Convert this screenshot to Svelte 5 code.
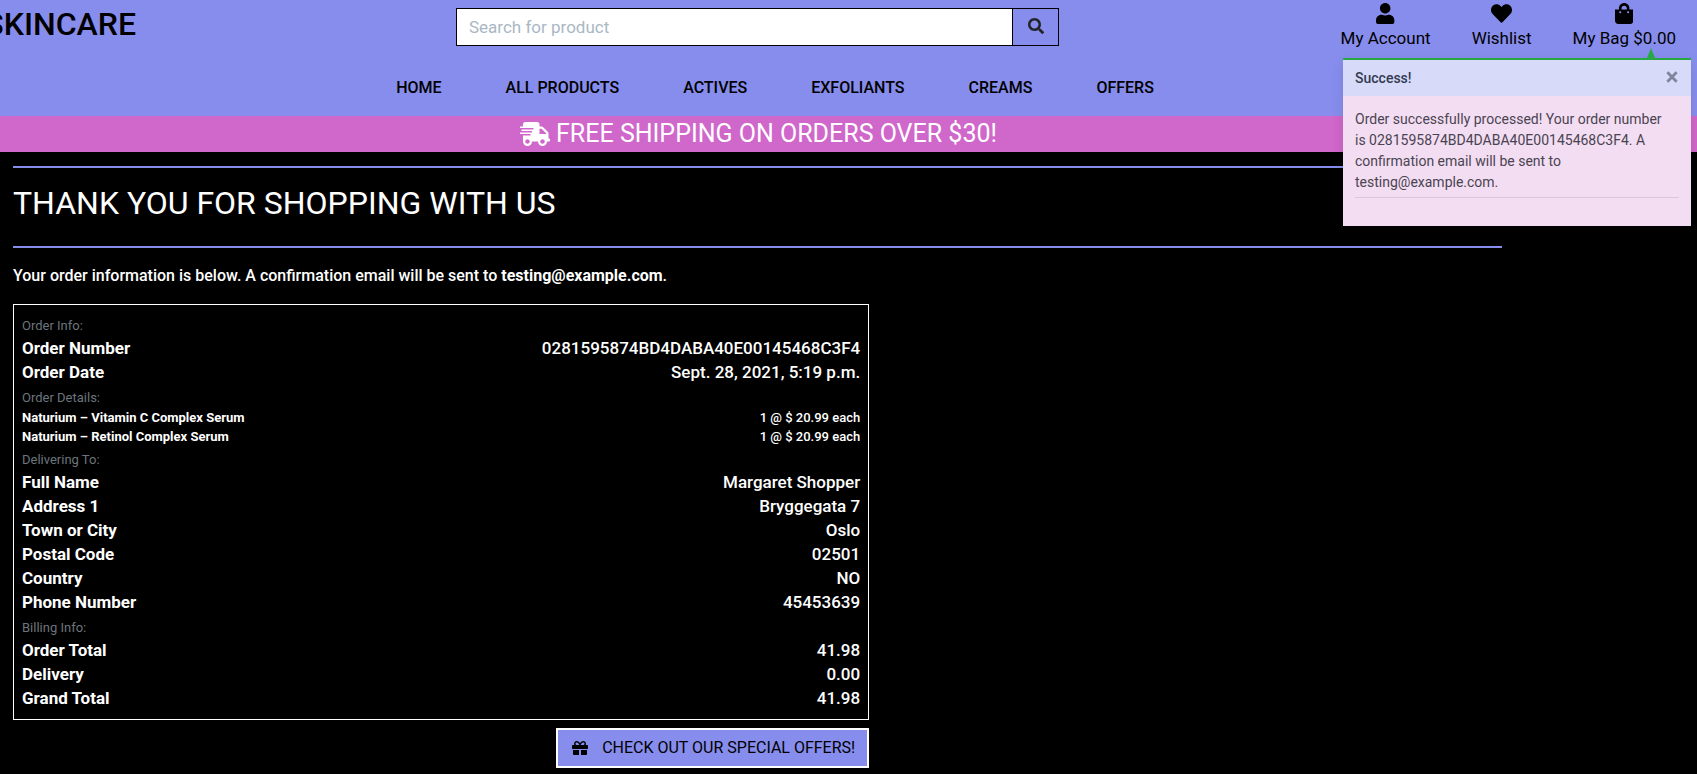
<script>
  const icons = {
    user: { box: '0 0 448 512', d: 'M224 256c70.7 0 128-57.3 128-128S294.7 0 224 0 96 57.3 96 128s57.3 128 128 128zm89.6 32h-16.7c-22.2 10.2-46.9 16-72.9 16s-50.6-5.8-72.9-16h-16.7C60.2 288 0 348.2 0 422.4V464c0 26.5 21.5 48 48 48h352c26.5 0 48-21.5 48-48v-41.6c0-74.2-60.2-134.4-134.4-134.4z' },
    heart: { box: '0 0 512 512', d: 'M462.3 62.6C407.5 15.9 326 24.3 275.7 76.2L256 96.5l-19.7-20.3C186.1 24.3 104.5 15.9 49.7 62.6c-62.8 53.6-66.1 149.8-9.9 207.9l193.5 199.8c12.5 12.9 32.8 12.9 45.3 0l193.5-199.8c56.3-58.1 53-154.3-9.8-207.9z' },
    bag: { box: '0 0 448 512', d: 'M352 160v-32C352 57.42 294.579 0 224 0 153.42 0 96 57.42 96 128v32H0v272c0 44.183 35.817 80 80 80h288c44.183 0 80-35.817 80-80V160h-96zm-192-32c0-35.29 28.71-64 64-64s64 28.71 64 64v32H160v-32zm160 120c-13.255 0-24-10.745-24-24s10.745-24 24-24 24 10.745 24 24-10.745 24-24 24zm-192 0c-13.255 0-24-10.745-24-24s10.745-24 24-24 24 10.745 24 24-10.745 24-24 24z' },
    search: { box: '0 0 512 512', d: 'M505 442.7L405.3 343c-4.5-4.5-10.6-7-17-7H372c27.6-35.3 44-79.7 44-128C416 93.1 322.9 0 208 0S0 93.1 0 208s93.1 208 208 208c48.3 0 92.7-16.4 128-44v16.3c0 6.4 2.5 12.5 7 17l99.7 99.7c9.4 9.4 24.6 9.4 33.9 0l28.3-28.3c9.4-9.4 9.4-24.6.1-34zM208 336c-70.7 0-128-57.2-128-128 0-70.7 57.2-128 128-128 70.7 0 128 57.2 128 128 0 70.7-57.2 128-128 128z' },
    gift: { box: '0 0 512 512', d: 'M32 448c0 17.7 14.3 32 32 32h160V320H32v128zm256 32h160c17.7 0 32-14.3 32-32V320H288v160zm192-320h-42.1c6.2-12.1 10.1-25.5 10.1-40 0-48.5-39.5-88-88-88-41.6 0-68.5 21.3-103 68.3-34.5-47-61.4-68.3-103-68.3-48.5 0-88 39.5-88 88 0 14.5 3.8 27.9 10.1 40H32c-17.7 0-32 14.3-32 32v80c0 8.8 7.2 16 16 16h480c8.8 0 16-7.2 16-16v-80c0-17.7-14.3-32-32-32zm-326.1 0c-22.1 0-40-17.9-40-40s17.9-40 40-40c19.9 0 34.6 3.3 86.1 80h-86.1zm206.1 0h-86.1c51.4-76.5 65.7-80 86.1-80 22.1 0 40 17.9 40 40s-17.9 40-40 40z' },
    truck: { box: '0 0 640 512', d: 'M624 352h-16V243.9c0-12.7-5.1-24.9-14.1-33.9L494 110.1c-9-9-21.2-14.1-33.9-14.1H416V48c0-26.5-21.5-48-48-48H112C85.5 0 64 21.5 64 48v48H8c-4.4 0-8 3.6-8 8v16c0 4.4 3.6 8 8 8h272c4.4 0 8 3.6 8 8v16c0 4.4-3.6 8-8 8H40c-4.4 0-8 3.6-8 8v16c0 4.4 3.6 8 8 8h208c4.4 0 8 3.6 8 8v16c0 4.4-3.6 8-8 8H8c-4.4 0-8 3.6-8 8v16c0 4.4 3.6 8 8 8h208c4.4 0 8 3.6 8 8v16c0 4.4-3.6 8-8 8H64v128c0 53 43 96 96 96s96-43 96-96h128c0 53 43 96 96 96s96-43 96-96h48c8.8 0 16-7.2 16-16v-32c0-8.8-7.2-16-16-16zM160 464c-26.5 0-48-21.5-48-48s21.5-48 48-48 48 21.5 48 48-21.5 48-48 48zm320 0c-26.5 0-48-21.5-48-48s21.5-48 48-48 48 21.5 48 48-21.5 48-48 48zm80-208H416V144h44.1l99.9 99.9V256z' }
  };

  const nav = ['HOME', 'ALL PRODUCTS', 'ACTIVES', 'EXFOLIANTS', 'CREAMS', 'OFFERS'];

  const actions = [
    { icon: 'user', label: 'My Account' },
    { icon: 'heart', label: 'Wishlist' },
    { icon: 'bag', label: 'My Bag $0.00' }
  ];

  const sections = [
    { title: 'Order Info:', rows: [
      ['Order Number', '0281595874BD4DABA40E00145468C3F4'],
      ['Order Date', 'Sept. 28, 2021, 5:19 p.m.']
    ] },
    { title: 'Order Details:', small: true, rows: [
      ['Naturium – Vitamin C Complex Serum', '1 @ $ 20.99 each'],
      ['Naturium – Retinol Complex Serum', '1 @ $ 20.99 each']
    ] },
    { title: 'Delivering To:', rows: [
      ['Full Name', 'Margaret Shopper'],
      ['Address 1', 'Bryggegata 7'],
      ['Town or City', 'Oslo'],
      ['Postal Code', '02501'],
      ['Country', 'NO'],
      ['Phone Number', '45453639']
    ] },
    { title: 'Billing Info:', rows: [
      ['Order Total', '41.98'],
      ['Delivery', '0.00'],
      ['Grand Total', '41.98']
    ] }
  ];

  let toastOpen = $state(true);
</script>

{#snippet icon(name)}
  <svg class="icon {name}" viewBox={icons[name].box} aria-hidden="true"><path d={icons[name].d} /></svg>
{/snippet}

<header>
  <div class="top">
    <a class="logo" href="#home">SKINCARE</a>
    <form class="search" onsubmit={(e) => e.preventDefault()}>
      <input type="text" placeholder="Search for product" aria-label="Search for product" />
      <button type="submit" aria-label="Search">{@render icon('search')}</button>
    </form>
    <div class="actions">
      {#each actions as action}
        <a href="#{action.icon}">{@render icon(action.icon)}<span>{action.label}</span></a>
      {/each}
    </div>
  </div>
  <nav>
    {#each nav as item}<a href="#shop">{item}</a>{/each}
  </nav>
</header>

<div class="banner">
  <h4>{@render icon('truck')}<span>FREE SHIPPING ON ORDERS OVER $30!</span></h4>
</div>

{#if toastOpen}
  <div class="toast" role="alert">
    <span class="arrow"></span>
    <div class="toast-head">
      <strong>Success!</strong>
      <button type="button" aria-label="Close" onclick={() => (toastOpen = false)}>
        <svg viewBox="0 0 12 12" aria-hidden="true"><path d="M2 2l8 8M10 2l-8 8" /></svg>
      </button>
    </div>
    <div class="toast-body">
      <p>Order successfully processed! Your order number is 0281595874BD4DABA40E00145468C3F4. A confirmation email will be sent to testing@example.com.</p>
      <hr />
    </div>
  </div>
{/if}

<main>
  <div class="title"><h2>THANK YOU FOR SHOPPING WITH US</h2></div>
  <p class="intro">Your order information is below. A confirmation email will be sent to <strong>testing@example.com</strong>.</p>
  <div class="order">
    <div class="details">
      {#each sections as section}
        <section class:small={section.small}>
          <h3>{section.title}</h3>
          <dl>
            {#each section.rows as [name, value]}
              <div><dt>{name}</dt><dd>{value}</dd></div>
            {/each}
          </dl>
        </section>
      {/each}
    </div>
    <a class="offers" href="#offers">{@render icon('gift')}<span>CHECK OUT OUR SPECIAL OFFERS!</span></a>
  </div>
</main>

<style>
  :global(body) {
    background: #000;
    color: #fff;
    font: 17px/24px Roboto, sans-serif;
    overflow-x: hidden;
  }
  :global(*) { box-sizing: border-box; }
  a { color: #000; text-decoration: none; }
  h2, h3, h4, p, dl, dd { margin: 0; }
  .icon { display: block; fill: currentColor; }

  header {
    background: #878dec;
    height: 116px;
    display: flex;
    flex-direction: column;
    justify-content: space-between;
  }
  .top {
    display: grid;
    grid-template-columns: 456fr 603fr 638fr;
    align-items: start;
  }
  .logo {
    width: 136px;
    display: flex;
    justify-content: flex-end;
    padding-top: 4px;
    font-size: 32px;
    line-height: 40px;
    font-weight: 500;
  }
  .search { display: flex; margin-top: 8px; height: 38px; }
  .search input {
    flex: 1;
    min-width: 0;
    border: 1px solid #000;
    border-radius: 0;
    padding: 0 12px;
    background: #fff;
    font: inherit;
  }
  .search input::placeholder { color: #aab7c4; opacity: 1; }
  .search button {
    width: 46px;
    border: 1px solid #000;
    border-left: 0;
    padding: 0 0 2px;
    background: #878dec;
    color: #212529;
    display: grid;
    place-items: center;
  }
  .icon.search { width: 16px; height: 16px; margin: 0; }
  .actions {
    display: flex;
    justify-content: flex-end;
    gap: 41px;
    padding: 3px 21px 0 0;
  }
  .actions a {
    display: flex;
    flex-direction: column;
    align-items: center;
    gap: 2px;
  }
  .actions .icon { height: 21px; }

  nav {
    display: flex;
    justify-content: center;
    gap: 64px;
    padding: 0 147px 16px 0;
    font-size: 16px;
    font-weight: 500;
  }

  .banner {
    height: 36px;
    background: #d067ca;
    padding-right: 180px;
  }
  h4 {
    display: flex;
    align-items: center;
    justify-content: center;
    gap: 6px;
    font-size: 25px;
    line-height: 36px;
    font-weight: 400;
  }
  .truck { height: 24px; width: 30px; }

  .toast {
    position: absolute;
    top: 58px;
    right: 6px;
    width: 348px;
    border-top: 2px solid #28a745;
    background: #f3ddf3;
    box-shadow: 0 4px 12px rgba(0, 0, 0, 0.1);
    font-size: 14px;
    line-height: 21px;
  }
  .arrow {
    position: absolute;
    top: -12px;
    right: 36px;
    border: 4px solid transparent;
    border-top: 0;
    border-bottom: 10px solid #28a745;
  }
  .toast-head {
    display: flex;
    justify-content: space-between;
    height: 36px;
    padding: 8px 12px;
    background: #d7daf9;
    color: #343a50;
  }
  .toast-head strong { font-weight: 500; }
  .toast-head button {
    border: 0;
    padding: 2px 0;
    background: none;
    height: 18px;
  }
  .toast-head svg {
    display: block;
    width: 14px;
    height: 14px;
    stroke: #81859a;
    stroke-width: 2.4;
    fill: none;
  }
  .toast-body { padding: 13px 12px 28px; color: #4a4450; }
  .toast-body p { padding-right: 12px; }
  hr { border: 0; border-top: 1px solid #dac7da; margin: 4px 0 0; }

  main { margin-right: 182px; padding: 14px 13px 0; }
  .title {
    border: solid #878dec;
    border-width: 2px 0;
    padding: 16px 0 24px;
  }
  h2 { font-size: 32px; line-height: 38px; font-weight: 400; }
  .intro { margin: 16px 0; font-size: 16px; font-weight: 500; }
  .intro strong { font-weight: 700; }
  .order {
    width: 57.5%;
    display: flex;
    flex-direction: column;
    align-items: flex-end;
    gap: 8px;
  }
  .details {
    align-self: stretch;
    border: 1px solid #fff;
    padding: 7px 8px 9px;
  }
  h3 {
    padding-top: 3px;
    font-size: 13px;
    line-height: 21px;
    font-weight: 400;
    color: #6c757d;
  }
  dl div { display: flex; justify-content: space-between; }
  dt { font-weight: 700; }
  dd { font-weight: 500; }
  .small dl { font-size: 13px; line-height: 19px; }
  .offers {
    display: flex;
    align-items: center;
    gap: 14px;
    height: 40px;
    padding: 0 12px 0 14px;
    border: 2px solid #fff;
    background: #878dec;
    font-size: 16px;
  }
  .gift { width: 16px; height: 16px; }
</style>
